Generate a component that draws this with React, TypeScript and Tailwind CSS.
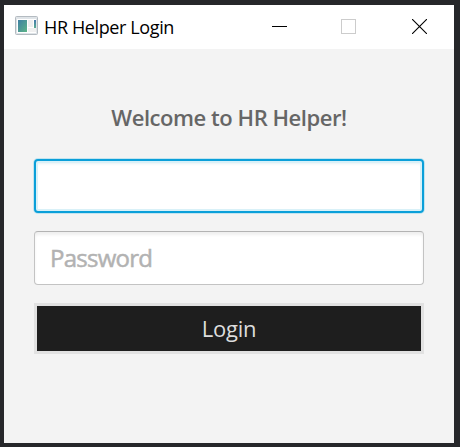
function AppIcon() {
  return (
    <svg width="23" height="19" viewBox="0 0 23 19" className="mt-[11px] shrink-0 self-start">
      <defs>
        <linearGradient id="pane" x1="0" y1="0" x2="1" y2="1">
          <stop offset="0" stopColor="#3f7fa3" />
          <stop offset="1" stopColor="#5cb487" />
        </linearGradient>
        <linearGradient id="strip" x1="0" y1="0" x2="0" y2="1">
          <stop offset="0" stopColor="#4679ad" />
          <stop offset="1" stopColor="#58ac91" />
        </linearGradient>
      </defs>
      <rect x="0.5" y="0.5" width="22" height="18" rx="1" fill="#dfe4e8" stroke="#b4bbc1" />
      <rect x="2" y="3" width="19" height="14" fill="#ffffff" />
      <rect x="3" y="4" width="9" height="12" fill="url(#pane)" />
      <rect x="13" y="4" width="5" height="7" fill="#eeeeee" />
      <rect x="13" y="12" width="8" height="4" fill="#f0f0f0" />
      <rect x="19" y="4" width="2" height="8" fill="url(#strip)" />
    </svg>
  );
}

function TitleBar() {
  return (
    <header className="flex h-11 items-center bg-white pl-[11px]">
      <AppIcon />
      <h1 className="ml-1.5 flex-1 whitespace-nowrap text-[18px] leading-6 tracking-[-0.38px] text-black">
        HR Helper Login
      </h1>
      <div className="flex items-center pb-[2px] pr-[27px]">
        <button aria-label="Minimize" className="mr-[54px] block h-px w-[15px] bg-black" />
        <button aria-label="Maximize" className="mr-14 block size-[15px] border border-[#cccccc]" />
        <button aria-label="Close" className="block">
          <svg width="15" height="15" viewBox="0 0 15 15" className="block">
            <path d="M0 0L15 15M15 0L0 15" stroke="#000" strokeWidth="1.1" />
          </svg>
        </button>
      </div>
    </header>
  );
}

export default function App() {
  return (
    <div className="h-[447px] w-[460px] overflow-hidden bg-[#26272a] pl-1 pt-[5px] font-['Open_Sans','Noto_Sans',sans-serif]">
      <div className="flex h-[438px] w-[450px] flex-col bg-[#f3f3f3]">
        <TitleBar />
        <form className="flex flex-col px-[30px] pt-[52px]">
          <h2 className="mb-[26px] h-8 whitespace-nowrap text-center text-[22px] font-semibold leading-8 tracking-[-0.45px] text-[#666666]">
            Welcome to HR Helper!
          </h2>
          <input
            type="text"
            aria-label="Username"
            className="mb-[18px] h-[54px] rounded-[4px] border-2 border-[#0a9fd9] bg-white shadow-[0_0_0_1px_#c2e4ef,inset_0_0_0_2px_#d9f1f8,inset_0_3px_3px_#e8f2f5] outline-none"
          />
          <input
            type="password"
            placeholder="Password"
            className="mb-[18px] h-[54px] rounded-[4px] border border-[#c3c3c3] border-t-[#b3b3b3] bg-white px-[15px] pb-[2px] text-[24px] tracking-[-0.75px] shadow-[inset_0_3px_3px_#f0f0f0] outline-none placeholder:text-[#b2b2b2] placeholder:[-webkit-text-stroke:0.5px_#b2b2b2]"
          />
          <button
            type="button"
            className="h-[51px] border-[3px] border-[#e1e1e1] bg-[#1e1e1e] text-center text-[22px] leading-[45px] tracking-[-0.2px] text-[#dddddd]"
          >
            Login
          </button>
        </form>
      </div>
    </div>
  );
}
